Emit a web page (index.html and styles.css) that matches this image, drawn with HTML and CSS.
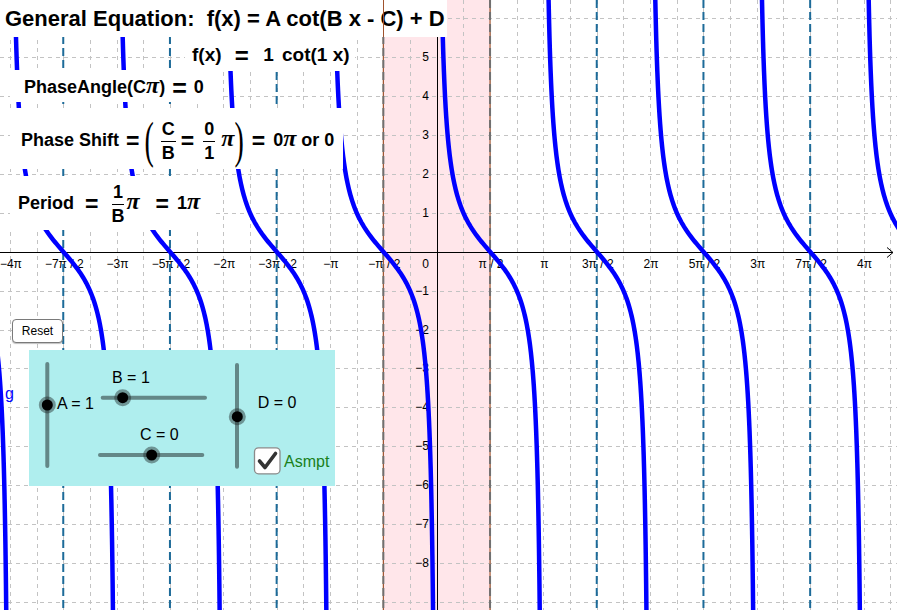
FILE: index.html
```
<!DOCTYPE html>
<html>
<head>
<meta charset="utf-8">
<title>General Equation cot</title>
<link rel="stylesheet" href="styles.css">
</head>
<body>
<div class="applet">
  <svg class="graph" id="graph" width="897" height="610" viewBox="0 0 897 610"></svg>

  <div class="title">General Equation:  f(x) = A cot(B x - C) + D</div>
  <div class="edge-over"></div>

  <div class="fx"><span>f(x)</span> <span class="eq fx1">=</span> <span class="fx2">1</span> <span class="fx3">cot(1</span> <span>x)</span></div>

  <div class="stack">
    <div class="box b1"><span>PhaseAngle(C</span><span class="pi">π</span><span>)</span> <span class="eq a1">=</span> <span class="a2">0</span></div>
    <div class="box b2"><span>Phase Shift</span> <span class="eq e0">=</span> <span class="paren pl">(</span><span class="frac f1"><span class="num">C</span><span class="den">B</span></span> <span class="eq">=</span> <span class="frac f2"><span class="num">0</span><span class="den">1</span></span><span class="pi p1">π</span><span class="paren pr">)</span> <span class="eq e3">=</span> <span class="tail">0<span class="pi">π</span> or 0</span></div>
    <div class="box b3"><span>Period</span> <span class="eq e4">=</span> <span class="frac f3"><span class="num">1</span><span class="den">B</span></span><span class="pi p2">π</span> <span class="eq e5">=</span> <span class="e6">1<span class="pi">π</span></span></div>
  </div>

  <button class="reset" type="button">Reset</button>

  <div class="glabel">g</div>

  <div class="panel">
    <svg class="sliders" width="306" height="136" viewBox="0 0 306 136">
      <line class="track" x1="18.3" y1="14" x2="18.3" y2="116"/>
      <circle class="halo" cx="18.3" cy="55" r="8.5"/>
      <circle class="knob" cx="18.3" cy="55" r="5.5"/>
      <text class="slabel" x="28" y="59">A = 1</text>

      <line class="track" x1="73.7" y1="47.7" x2="176" y2="47.7"/>
      <circle class="halo" cx="93.7" cy="47.7" r="8.5"/>
      <circle class="knob" cx="93.7" cy="47.7" r="5.5"/>
      <text class="slabel" x="83" y="33.3">B = 1</text>

      <line class="track" x1="71" y1="105" x2="173.3" y2="105"/>
      <circle class="halo" cx="122.7" cy="105" r="8.5"/>
      <circle class="knob" cx="122.7" cy="105" r="5.5"/>
      <text class="slabel" x="111" y="90">C = 0</text>

      <line class="track" x1="208" y1="15" x2="208" y2="116.7"/>
      <circle class="halo" cx="208.3" cy="66.7" r="8.5"/>
      <circle class="knob" cx="208.3" cy="66.7" r="5.5"/>
      <text class="slabel" x="228.7" y="58.3">D = 0</text>

      <rect class="cbox" x="225.5" y="97.8" width="25.5" height="26" rx="4" ry="4"/>
      <path class="check" d="M230.5 111 L236 117.5 L246.5 103.5"/>
      <text class="slabel asmpt" x="255" y="116.7">Asmpt</text>
    </svg>
  </div>
</div>
<script src="script.js"></script>
</body>
</html>
```

FILE: styles.css
```
html, body {
  margin: 0;
  padding: 0;
  background: #ffffff;
}

.applet {
  position: relative;
  width: 897px;
  height: 610px;
  overflow: hidden;
  background: #ffffff;
  font-family: "Liberation Sans", Arial, sans-serif;
  color: #000;
}

.graph {
  position: absolute;
  left: 0;
  top: 0;
  display: block;
}

.grid {
  stroke: #c3c3c3;
  stroke-width: 1;
  stroke-dasharray: 4 4;
}

.axis {
  stroke: #000;
  stroke-width: 1;
  fill: none;
}

.xl, .yl {
  font-family: "Liberation Sans", Arial, sans-serif;
  font-size: 12px;
  fill: #000;
}

.asym {
  stroke: #1d6b99;
  stroke-width: 2;
  stroke-dasharray: 8 4;
}

.edge {
  stroke: #a0522d;
  stroke-width: 1.2;
}

.edgedash {
  stroke: #707070;
  stroke-width: 2;
  stroke-dasharray: 8 4;
}

.curve {
  stroke: #0000ff;
  stroke-width: 4.5;
  fill: none;
  stroke-linejoin: round;
}

/* title */
.title {
  position: absolute;
  left: 0;
  top: 0;
  width: 447px;
  height: 37px;
  box-sizing: border-box;
  padding-left: 5px;
  background: #fff;
  font-weight: bold;
  font-size: 22px;
  line-height: 38px;
  white-space: pre;
}

.edge-over {
  position: absolute;
  left: 382.8px;
  top: 0;
  width: 1.2px;
  height: 37px;
  background: #a0522d;
}

/* shared math pieces */
.eq {
  display: inline-block;
  vertical-align: middle;
  font-size: 23px;
  line-height: 20px;
}

.pi {
  font-family: "Liberation Serif", "Times New Roman", serif;
  font-style: italic;
  font-weight: bold;
  font-size: 24px;
}

.fx {
  position: absolute;
  left: 185px;
  top: 37px;
  width: 170px;
  height: 34px;
  box-sizing: border-box;
  padding-left: 7px;
  background: #fff;
  font-weight: bold;
  font-size: 19px;
  line-height: 36px;
  white-space: nowrap;
}

.fx .eq { font-size: 24px; }
.fx1 { margin-left: 8px; }
.fx2 { margin-left: 9px; }
.fx3 { margin-left: 3px; }

/* formula boxes */
.stack {
  position: absolute;
  left: 10px;
  top: 70px;
  display: flex;
  flex-direction: column;
  align-items: flex-start;
}

.box {
  display: block;
  background: #fff;
  box-sizing: border-box;
  font-weight: bold;
  font-size: 18px;
  white-space: nowrap;
}

.b1 {
  width: 212px;
  height: 32px;
  padding-left: 14px;
  line-height: 31px;
}

.a1 { margin-left: 2px; font-size: 25px; }
.a2 { margin-left: 2px; }

.b2 {
  margin-top: 6px;
  width: 333px;
  height: 61px;
  padding-left: 11px;
  line-height: 61px;
}

.b3 {
  margin-top: 7px;
  width: 202px;
  height: 54px;
  padding-left: 8px;
  line-height: 50px;
}

.e0 { margin-left: 2px; }

.paren {
  display: inline-block;
  vertical-align: middle;
  font-family: "Liberation Serif", "Times New Roman", serif;
  font-weight: normal;
  font-size: 28px;
  line-height: 28px;
  transform: scaleY(1.8);
}

.pl { margin-left: 0; }
.pr { margin-left: 0; }

.frac {
  display: inline-flex;
  vertical-align: middle;
  flex-direction: column;
  align-items: center;
  font-size: 18px;
  line-height: 19px;
}

.num {
  border-bottom: 1.4px solid #000;
  padding: 0 1px 2px;
}

.den {
  padding-top: 2px;
}

.f1 { margin-left: 7px; }
.f2 { margin-left: 4px; }
.f3 { margin-left: 8px; }

.p1 { margin-left: 6px; }
.p2 { margin-left: 2px; }

.e3 { margin-left: 3px; }
.tail { margin-left: 3px; }

.e4 { margin-left: 6px; }
.e5 { margin-left: 11px; }
.e6 { margin-left: 3px; }

/* reset button */
.reset {
  position: absolute;
  left: 12px;
  top: 319px;
  width: 51px;
  height: 24px;
  padding: 0;
  border: 1px solid #7a7a7a;
  border-radius: 4px;
  background: #fff;
  box-shadow: 0 1px 1px rgba(0, 0, 0, 0.25);
  font-family: "Liberation Sans", Arial, sans-serif;
  font-size: 12px;
  color: #000;
}

.glabel {
  position: absolute;
  left: 5px;
  top: 385px;
  font-size: 16px;
  color: #0000ff;
}

/* slider panel */
.panel {
  position: absolute;
  left: 29px;
  top: 350px;
  width: 306px;
  height: 136px;
  background: #afeeee;
}

.sliders {
  display: block;
}

.track {
  stroke: #638787;
  stroke-width: 4;
  stroke-linecap: round;
}

.halo {
  fill: rgba(30, 40, 40, 0.45);
}

.knob {
  fill: #000;
}

.slabel {
  font-family: "Liberation Sans", Arial, sans-serif;
  font-size: 16px;
  fill: #000;
}

.asmpt {
  fill: #1a801a;
}

.cbox {
  fill: #fff;
  stroke: #8a8a8a;
  stroke-width: 1.3;
}

.check {
  fill: none;
  stroke: #333;
  stroke-width: 3.6;
  stroke-linecap: round;
  stroke-linejoin: round;
}
```

FILE: script.js
```
(function () {
  var NS = 'http://www.w3.org/2000/svg';
  var svg = document.getElementById('graph');
  var W = 897, H = 610;
  var X0 = 436.7, P = 106.7, Y0 = 251.7, U = 38.9;

  function add(tag, attrs, text) {
    var e = document.createElementNS(NS, tag);
    for (var k in attrs) e.setAttribute(k, attrs[k]);
    if (text != null) e.textContent = text;
    svg.appendChild(e);
    return e;
  }

  // shaded band between -pi/2 and pi/2
  add('rect', { x: X0 - P / 2, y: 0, width: P, height: H, fill: '#ffe6ea' });

  // grid
  var k, j, x, y;
  for (k = -17; k <= 17; k++) {
    x = X0 + k * P / 4;
    if (x < 0 || x > W || k === 0) continue;
    x = Math.round(x) + 0.5;
    add('line', { x1: x, y1: 0, x2: x, y2: H, 'class': 'grid' });
  }
  for (j = -7; j <= 10; j++) {
    y = Y0 + j * U;
    if (y < 0 || y > H || j === 0) continue;
    y = Math.round(y) + 0.5;
    add('line', { x1: 0, y1: y, x2: W, y2: y, 'class': 'grid' });
  }

  // axes
  var ax = Math.round(X0) + 0.5, ay = Math.round(Y0) + 0.5;
  add('line', { x1: 0, y1: ay, x2: 893, y2: ay, 'class': 'axis' });
  add('polyline', { points: '887,' + (ay - 5) + ' 893,' + ay + ' 887,' + (ay + 5), 'class': 'axis' });
  add('line', { x1: ax, y1: 0, x2: ax, y2: H, 'class': 'axis' });

  // x labels
  function lbl(k) {
    var a = Math.abs(k), s;
    if (a % 2 === 0) { s = (a / 2 === 1 ? '' : a / 2) + 'π'; }
    else { s = (a === 1 ? '' : a) + 'π / 2'; }
    return (k < 0 ? '−' : '') + s;
  }
  for (k = -8; k <= 8; k++) {
    if (k === 0) continue;
    x = X0 + k * P / 2;
    add('text', { x: x + 1, y: 268, 'class': 'xl', 'text-anchor': 'middle' }, lbl(k));
  }
  add('text', { x: 429, y: 268, 'class': 'xl', 'text-anchor': 'end' }, '0');

  // y labels
  for (j = -8; j <= 5; j++) {
    if (j === 0) continue;
    y = Y0 - j * U + 4;
    add('text', { x: 429, y: y, 'class': 'yl', 'text-anchor': 'end' }, (j < 0 ? '−' + (-j) : '' + j));
  }

  // asymptote lines
  [-7, -5, -3, 3, 5, 7].forEach(function (k) {
    var x = X0 + k * P / 2;
    add('line', { x1: x, y1: 0, x2: x, y2: H, 'class': 'asym' });
  });
  [-1, 1].forEach(function (k) {
    var x = X0 + k * P / 2;
    add('line', { x1: x, y1: 0, x2: x, y2: H, 'class': 'edge' });
    add('line', { x1: x, y1: 0, x2: x, y2: H, 'class': 'edgedash' });
  });

  // curve f(x) = cot(x)
  for (var n = -5; n <= 4; n++) {
    var a = X0 + n * P, d = '';
    for (var v = 16; v >= -16.001; v -= 0.05) {
      var t = Math.atan2(1, v);
      var px = a + t * P / Math.PI;
      var py = Y0 - v * U;
      d += (d ? ' L' : 'M') + px.toFixed(2) + ' ' + py.toFixed(2);
    }
    add('path', { d: d, 'class': 'curve' });
  }
})();
```
